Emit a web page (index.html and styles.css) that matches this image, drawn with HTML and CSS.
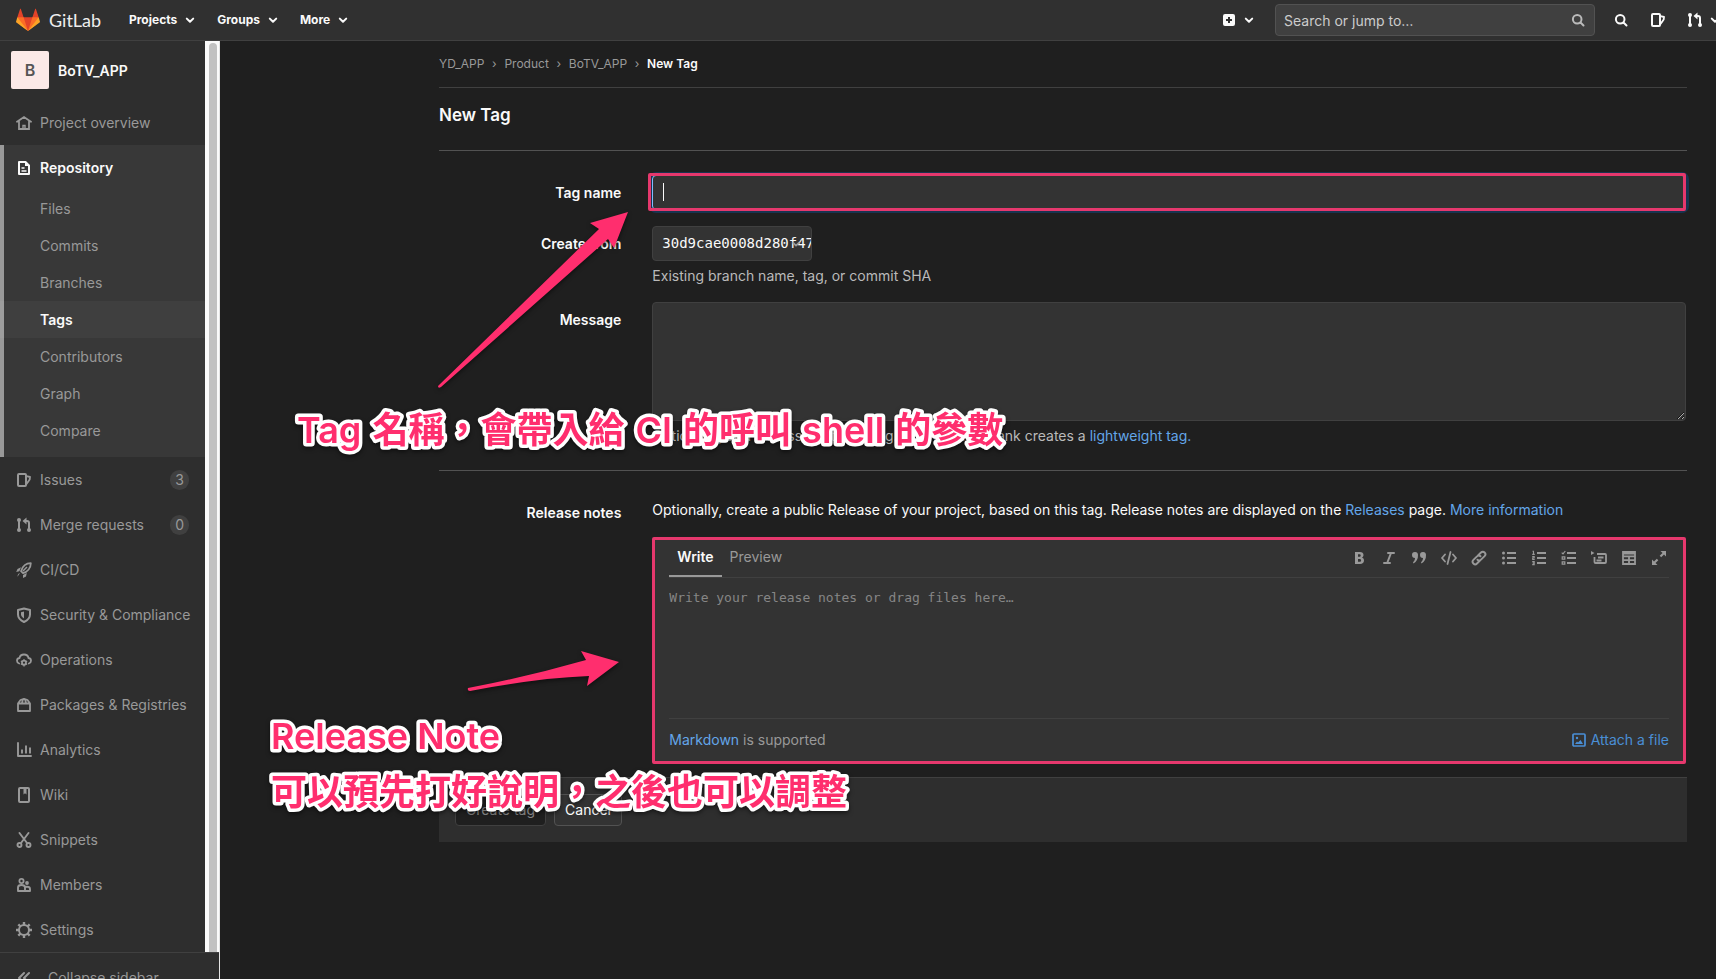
FILE: index.html
```html
<!DOCTYPE html>
<html lang="en">
<head>
<meta charset="utf-8">
<title>New Tag · BoTV_APP · GitLab</title>
<link rel="stylesheet" href="styles.css">
</head>
<body>
<svg class="sprite" aria-hidden="true">
  <symbol id="chevron" viewBox="0 0 16 16"><path d="M4.8 6.6 8 9.8l3.200-3.200" fill="none" stroke="currentColor" stroke-width="2" stroke-linecap="round" stroke-linejoin="round"/></symbol>
  <symbol id="home" viewBox="0 0 16 16"><path d="M1 6.700 8 2l7 4.700M3 6.500V14h10V6.500" fill="none" stroke="currentColor" stroke-width="1.800" stroke-linecap="round"/><path d="M7 14v-3.500h2V14" fill="none" stroke="currentColor" stroke-width="1.400"/></symbol>
  <symbol id="doc" viewBox="0 0 16 16"><path d="M3 2h6.500L13 5.500V14H3z" fill="none" stroke="currentColor" stroke-width="2" stroke-linejoin="round"/><path d="M5.500 8h3M5.500 11h5" fill="none" stroke="currentColor" stroke-width="1.600"/><path d="M9 2v4h4z" fill="currentColor"/></symbol>
  <symbol id="issues" viewBox="0 0 16 16"><rect x="2" y="2" width="8" height="12" rx="1" fill="none" stroke="currentColor" stroke-width="2"/><path d="M10.500 4.200 14 5l-.300 2.500-3.200 4.500" fill="none" stroke="currentColor" stroke-width="1.800" stroke-linejoin="round"/></symbol>
  <symbol id="merge" viewBox="0 0 16 16"><path d="M3 3v10M8.500 4H11q2 0 2 2v7" fill="none" stroke="currentColor" stroke-width="2"/><circle cx="3" cy="3" r="2" fill="currentColor"/><circle cx="3" cy="13" r="2" fill="currentColor"/><circle cx="13" cy="13" r="2" fill="currentColor"/><path d="M10.500.500v7L6.500 4z" fill="currentColor"/></symbol>
  <symbol id="rocket" viewBox="0 0 16 16"><path d="M14.800 1.200c-4.500 0-8.300 3.300-9.800 8L7 11.200c4.500-1.500 7.800-5.500 7.800-10z" fill="none" stroke="currentColor" stroke-width="1.800" stroke-linejoin="round"/><path d="M5 5.200 1.500 7 .200 10l3.200-.800zM7 13l3.800-2-.800 3.500L7 16zM1.500 14.800c0-2 .800-3.300 2.500-3.800" fill="currentColor"/><path d="m7 9 4-4" stroke="currentColor" stroke-width="1.500"/></symbol>
  <symbol id="shield" viewBox="0 0 16 16"><path d="M8 1.500 14 3v4.500c0 3.500-2.500 5.800-6 7.500-3.500-1.700-6-4-6-7.500V3z" fill="none" stroke="currentColor" stroke-width="2" stroke-linejoin="round"/><path d="M8 4.500v7C6 10.300 5 9 5 7.300v-2z" fill="currentColor"/></symbol>
  <symbol id="cloud" viewBox="0 0 16 16"><path d="M3.200 11.500C1.800 11 1 10 1 8.700 1 7.200 2 6.200 3.500 6 4 3.600 5.700 2.500 8 2.500S12 3.600 12.500 6c1.500.200 2.500 1.200 2.500 2.700 0 1.300-.800 2.300-2.200 2.800" fill="none" stroke="currentColor" stroke-width="1.800" stroke-linecap="round"/><circle cx="8" cy="10.700" r="2" fill="none" stroke="currentColor" stroke-width="1.700"/><path d="M8 7.200v1.500M8 12.700v1.800M4.900 9l1.400.800M9.700 11.700l1.400.800M11.100 9l-1.400.800M6.300 11.700l-1.400.800" stroke="currentColor" stroke-width="1.400"/></symbol>
  <symbol id="package" viewBox="0 0 16 16"><path d="M2 6.500h12V14H2zM2 6.500 4.500 3 8 1.800 11.500 3 14 6.500M6 6l1-4M10 6 9 2" fill="none" stroke="currentColor" stroke-width="1.800" stroke-linejoin="round"/></symbol>
  <symbol id="chart" viewBox="0 0 16 16"><path d="M2 1v13h13" fill="none" stroke="currentColor" stroke-width="1.900" stroke-linecap="round" stroke-linejoin="round"/><path d="M6 7.500v4M10 3.500v8M14 5.500v6" stroke="currentColor" stroke-width="1.900"/></symbol>
  <symbol id="book" viewBox="0 0 16 16"><rect x="3" y="1" width="10" height="14" rx="1" fill="none" stroke="currentColor" stroke-width="2"/><path d="M7.500 2v5.500L9 6.300l1.500 1.200V2z" fill="currentColor"/></symbol>
  <symbol id="scissors" viewBox="0 0 16 16"><path d="m3.500 1 7.500 10M12.500 1 5 11" stroke="currentColor" stroke-width="1.900" stroke-linecap="round"/><circle cx="3.500" cy="13" r="2" fill="none" stroke="currentColor" stroke-width="1.900"/><circle cx="12.500" cy="13" r="2" fill="none" stroke="currentColor" stroke-width="1.900"/></symbol>
  <symbol id="users" viewBox="0 0 16 16"><circle cx="5.500" cy="4" r="2.100" fill="none" stroke="currentColor" stroke-width="1.800"/><circle cx="11" cy="6" r="1.900" fill="currentColor"/><path d="M2 14v-3.500Q2 8 5.500 8T9 10.500V14zM9 14h5v-2q0-2.200-3-2.200-1.500 0-2 .800" fill="none" stroke="currentColor" stroke-width="1.900" stroke-linejoin="round"/></symbol>
  <symbol id="gear" viewBox="0 0 16 16"><circle cx="8" cy="8" r="5" fill="none" stroke="currentColor" stroke-width="2"/><path d="M8 0v3M8 13v3M0 8h3M13 8h3M2.300 2.300l2.200 2.200M11.500 11.500l2.200 2.200M13.700 2.300l-2.200 2.200M4.500 11.500l-2.200 2.200" stroke="currentColor" stroke-width="2.400"/></symbol>
  <symbol id="collapse" viewBox="0 0 16 16"><path d="M8 3 3 8l5 5M13 3 8 8l5 5" fill="none" stroke="currentColor" stroke-width="2" stroke-linecap="round" stroke-linejoin="round"/></symbol>
  <symbol id="plus" viewBox="0 0 16 16"><path fill-rule="evenodd" d="M4 2h8a2 2 0 0 1 2 2v8a2 2 0 0 1-2 2H4a2 2 0 0 1-2-2V4a2 2 0 0 1 2-2zm3 3v2H5v2h2v2h2V9h2V7H9V5z" fill="currentColor"/></symbol>
  <symbol id="search" viewBox="0 0 16 16"><circle cx="7.200" cy="7.200" r="4.300" fill="none" stroke="currentColor" stroke-width="2"/><path d="m10.500 10.500 3 3" stroke="currentColor" stroke-width="2" stroke-linecap="round"/></symbol>
  <symbol id="bold" viewBox="0 0 16 16"><path fill-rule="evenodd" d="M4 2h5c2.200 0 3.500 1.200 3.500 3 0 1.200-.600 2.100-1.600 2.600 1.300.500 2.100 1.500 2.100 2.900 0 2.200-1.500 3.500-4 3.500H4zm3 2.200v2.600h1.400c.800 0 1.300-.500 1.300-1.300s-.500-1.300-1.300-1.300zm0 4.700v2.900h1.600c.900 0 1.500-.500 1.500-1.400 0-1-.600-1.500-1.500-1.500z" fill="currentColor"/></symbol>
  <symbol id="italic" viewBox="0 0 16 16"><path d="M7 3h6M3 13h6M10 3 6.200 13" stroke="currentColor" stroke-width="2" stroke-linecap="round"/></symbol>
  <symbol id="quote" viewBox="0 0 16 16"><path d="M1 5a3 3 0 0 1 6-.200C7.200 9 5.500 12 2.500 13.500L2 12.300C3.500 11 4 9.500 4 8a3 3 0 0 1-3-3zm8 0a3 3 0 0 1 6-.200c.200 4.200-1.500 7.200-4.500 8.700l-.500-1.200c1.500-1.300 2-2.800 2-4.300a3 3 0 0 1-3-3z" fill="currentColor"/></symbol>
  <symbol id="code" viewBox="0 0 16 16"><path d="M4 4.500 1 8l3 3.500M12 4.500 15 8l-3 3.500M9.500 2l-3 12" fill="none" stroke="currentColor" stroke-width="1.800" stroke-linecap="round" stroke-linejoin="round"/></symbol>
  <symbol id="link" viewBox="0 0 16 16"><path d="m7 5.500 3-3a2.500 2.500 0 0 1 3.600 3.600L10 9.700a2.500 2.500 0 0 1-3.500 0M9 10.500l-3 3a2.500 2.500 0 0 1-3.600-3.600L6 6.300a2.500 2.500 0 0 1 3.500 0" fill="none" stroke="currentColor" stroke-width="1.900" stroke-linecap="round"/></symbol>
  <symbol id="bullets" viewBox="0 0 16 16"><path d="M6 3h9M6 8h9M6 13h9" stroke="currentColor" stroke-width="2"/><circle cx="2.500" cy="3" r="1.500" fill="currentColor"/><circle cx="2.500" cy="8" r="1.500" fill="currentColor"/><circle cx="2.500" cy="13" r="1.500" fill="currentColor"/></symbol>
  <symbol id="numbers" viewBox="0 0 16 16"><path d="M6 3h9M6 8h9M6 13h9" stroke="currentColor" stroke-width="2"/><path d="M1.500 1.300h1v3M1.200 4.400h2.600M1.200 6.600h2v1.400h-1.500v1.500h2M1.200 11.600h2v3h-2M1.700 13.100h1.500" fill="none" stroke="currentColor" stroke-width="1.100"/></symbol>
  <symbol id="tasks" viewBox="0 0 16 16"><path d="M6 3h9M6 8h9M6 13h9" stroke="currentColor" stroke-width="2"/><path d="m.700 2.600 1.300 1.300L4.300 1M1.200 6.800h2.600v2.400H1.200zM1.200 11.800h2.600v2.400H1.200z" fill="none" stroke="currentColor" stroke-width="1.200"/></symbol>
  <symbol id="details" viewBox="0 0 16 16"><path d="M0 1v4l3.500-2z" fill="currentColor"/><path d="M6 4h8q1 0 1 1v7q0 1-1 1H4.500q-1 0-1-1V7M7 7.500h5.500M5.500 10.500h5" fill="none" stroke="currentColor" stroke-width="1.800"/></symbol>
  <symbol id="table" viewBox="0 0 16 16"><path d="M2 2h12v12H2zM2 6.300h12M2 10.200h12M8 6v8" fill="none" stroke="currentColor" stroke-width="1.800"/><path d="M2 2h12v2.500H2z" fill="currentColor"/></symbol>
  <symbol id="expand" viewBox="0 0 16 16"><path d="M9.500 1H15v5.500l-2-2-2.800 2.800-1.500-1.500L11.500 3zM6.500 15H1V9.500l2 2 2.800-2.800 1.500 1.500L4.500 13z" fill="currentColor"/></symbol>
  <symbol id="image" viewBox="0 0 16 16"><rect x="2" y="2" width="12" height="12" rx="1" fill="none" stroke="currentColor" stroke-width="1.700"/><circle cx="6" cy="6" r="1.200" fill="currentColor"/><path d="m4 12 2-2.500 1 1L9.500 8l2.500 4z" fill="currentColor"/></symbol>
</svg>

<header class="topbar">
  <a class="brand" href="#">
    <svg class="tanuki" viewBox="0 0 36 36" aria-hidden="true">
      <path fill="#e24329" d="M2 14l9.380 9v-9l-4-12.280c-.205-.632-1.176-.632-1.380 0z"/>
      <path fill="#e24329" d="M34 14l-9.380 9v-9l4-12.280c.205-.632 1.176-.632 1.380 0z"/>
      <path fill="#e24329" d="M18 34.380 3 14h30z"/>
      <path fill="#fc6d26" d="M18 34.380 11.380 14H2l4 11z"/>
      <path fill="#fc6d26" d="M18 34.380 24.620 14H34l-4 11z"/>
      <path fill="#fca326" d="M2 14 .1 20.160c-.18.565 0 1.200.5 1.560l17.420 12.660z"/>
      <path fill="#fca326" d="M34 14l1.900 6.160c.18.565 0 1.200-.5 1.560L18 34.380z"/>
    </svg>
    <span class="wordmark">GitLab</span>
  </a>
  <nav class="topnav" aria-label="Main">
    <button type="button">Projects <svg class="icon"><use href="#chevron"/></svg></button>
    <button type="button">Groups <svg class="icon"><use href="#chevron"/></svg></button>
    <button type="button">More <svg class="icon"><use href="#chevron"/></svg></button>
  </nav>
  <button class="new-menu" type="button" aria-label="New"><svg class="icon"><use href="#plus"/></svg><svg class="icon"><use href="#chevron"/></svg></button>
  <div class="search">
    <input type="text" aria-label="Search" placeholder="Search or jump to…">
    <svg class="icon"><use href="#search"/></svg>
  </div>
  <nav class="shortcuts" aria-label="Shortcuts">
    <a href="#" aria-label="Search"><svg class="icon"><use href="#search"/></svg></a>
    <a href="#" aria-label="Issues"><svg class="icon"><use href="#issues"/></svg></a>
    <a href="#" aria-label="Merge requests"><svg class="icon"><use href="#merge"/></svg><svg class="icon"><use href="#chevron"/></svg></a>
  </nav>
</header>

<div class="layout">
  <aside class="sidebar">
    <div class="sidebar-scroll">
      <nav class="side-nav" aria-label="Project">
        <a class="project" href="#"><span class="avatar">B</span><span class="project-name">BoTV_APP</span></a>
        <a class="item" href="#"><svg class="icon"><use href="#home"/></svg>Project overview</a>
        <div class="section">
          <a class="item current" href="#"><svg class="icon"><use href="#doc"/></svg>Repository</a>
          <a class="sub" href="#">Files</a>
          <a class="sub" href="#">Commits</a>
          <a class="sub" href="#">Branches</a>
          <a class="sub current" href="#">Tags</a>
          <a class="sub" href="#">Contributors</a>
          <a class="sub" href="#">Graph</a>
          <a class="sub" href="#">Compare</a>
        </div>
        <a class="item" href="#"><svg class="icon"><use href="#issues"/></svg>Issues<span class="count">3</span></a>
        <a class="item" href="#"><svg class="icon"><use href="#merge"/></svg>Merge requests<span class="count">0</span></a>
        <a class="item" href="#"><svg class="icon"><use href="#rocket"/></svg>CI/CD</a>
        <a class="item" href="#"><svg class="icon"><use href="#shield"/></svg>Security &amp; Compliance</a>
        <a class="item" href="#"><svg class="icon"><use href="#cloud"/></svg>Operations</a>
        <a class="item" href="#"><svg class="icon"><use href="#package"/></svg>Packages &amp; Registries</a>
        <a class="item" href="#"><svg class="icon"><use href="#chart"/></svg>Analytics</a>
        <a class="item" href="#"><svg class="icon"><use href="#book"/></svg>Wiki</a>
        <a class="item" href="#"><svg class="icon"><use href="#scissors"/></svg>Snippets</a>
        <a class="item" href="#"><svg class="icon"><use href="#users"/></svg>Members</a>
        <a class="item" href="#"><svg class="icon"><use href="#gear"/></svg>Settings</a>
      </nav>
      <div class="scroll-track"><div class="scroll-thumb"></div></div>
    </div>
    <button class="collapse" type="button"><svg class="icon"><use href="#collapse"/></svg>Collapse sidebar</button>
  </aside>

  <main class="content">
    <nav class="crumbs" aria-label="Breadcrumb">
      <a href="#">YD_APP</a><span>›</span><a href="#">Product</a><span>›</span><a href="#">BoTV_APP</a><span>›</span><a class="here" href="#">New Tag</a>
    </nav>
    <h1>New Tag</h1>
    <form>
      <div class="row">
        <label for="tag-name">Tag name</label>
        <div class="field marked"><input id="tag-name" class="control tag-name" type="text"><span class="caret"></span></div>
      </div>
      <div class="row">
        <label for="ref">Create from</label>
        <div class="field">
          <button id="ref" class="control ref" type="button">30d9cae0008d280f47<svg class="icon"><use href="#chevron"/></svg></button>
          <p class="help">Existing branch name, tag, or commit SHA</p>
        </div>
      </div>
      <div class="row">
        <label for="message">Message</label>
        <div class="field">
          <textarea id="message" class="control message"></textarea>
          <p class="help">Optionally, add a message to the tag. Leaving this blank creates a <a href="#">lightweight tag.</a></p>
        </div>
      </div>
      <hr>
      <div class="row notes">
        <label for="notes">Release notes</label>
        <div class="field">
          <p class="intro">Optionally, create a public Release of your project, based on this tag. Release notes are displayed on the <a href="#">Releases</a> page. <a href="#">More information</a></p>
          <div class="editor">
            <div class="editor-head">
              <button class="tab active" type="button">Write</button>
              <button class="tab" type="button">Preview</button>
              <div class="tools">
                <button type="button" aria-label="Bold"><svg class="icon"><use href="#bold"/></svg></button>
                <button type="button" aria-label="Italic"><svg class="icon"><use href="#italic"/></svg></button>
                <button type="button" aria-label="Quote"><svg class="icon"><use href="#quote"/></svg></button>
                <button type="button" aria-label="Code"><svg class="icon"><use href="#code"/></svg></button>
                <button type="button" aria-label="Link"><svg class="icon"><use href="#link"/></svg></button>
                <button type="button" aria-label="Bullet list"><svg class="icon"><use href="#bullets"/></svg></button>
                <button type="button" aria-label="Numbered list"><svg class="icon"><use href="#numbers"/></svg></button>
                <button type="button" aria-label="Task list"><svg class="icon"><use href="#tasks"/></svg></button>
                <button type="button" aria-label="Collapsible section"><svg class="icon"><use href="#details"/></svg></button>
                <button type="button" aria-label="Table"><svg class="icon"><use href="#table"/></svg></button>
                <button type="button" aria-label="Full screen"><svg class="icon"><use href="#expand"/></svg></button>
              </div>
            </div>
            <textarea id="notes" class="notes-text" placeholder="Write your release notes or drag files here…"></textarea>
            <div class="editor-foot">
              <span><a href="#">Markdown</a> is supported</span>
              <button class="attach" type="button"><svg class="icon"><use href="#image"/></svg>Attach a file</button>
            </div>
          </div>
        </div>
      </div>
      <div class="actions">
        <button class="btn create" type="submit" disabled>Create tag</button>
        <button class="btn" type="button">Cancel</button>
      </div>
    </form>
  </main>
</div>

<svg class="callouts" aria-label="Callouts">
  <path d="M438 386 599 229 590 223 628 212 614 248 608 239 441 387Q438 389 438 386z"/>
  <path d="M468 688Q527 677 586 660L581 651 619 662 587 686 589 676Q537 678 470 691 467 691 468 688z"/>
  <text x="297" y="443">Tag<tspan dx="2"> 名稱，會帶入給</tspan><tspan dx="2"> CI</tspan><tspan dx="2"> 的呼叫</tspan><tspan dx="2"> shell</tspan><tspan dx="2"> 的參數</tspan></text>
  <text x="271" y="749">Release Note</text>
  <text x="271" y="805">可以預先打好說明，之後也可以調整</text>
</svg>
</body>
</html>
```
FILE: styles.css
```css
* { box-sizing: border-box; }

body {
  margin: 0;
  height: 100vh;
  display: flex;
  flex-direction: column;
  overflow: hidden;
  position: relative;
  background: #1f1f1f;
  color: #fafafa;
  font: 14px/20px Inter, "Noto Sans CJK TC", sans-serif;
}

a { color: #63a6e9; text-decoration: none; }
button { font: inherit; color: inherit; background: none; border: 0; padding: 0; white-space: nowrap; }
p { margin: 0; }
.sprite { display: none; }
.icon { width: 16px; height: 16px; flex: none; }

/* Top bar */
.topbar {
  flex: none;
  height: 41px;
  display: flex;
  align-items: center;
  padding-left: 16px;
  background: #303030;
  border-bottom: 1px solid #404040;
  overflow: hidden;
}
.brand { display: flex; align-items: center; gap: 9px; width: 113px; flex: none; color: #eee; }
.tanuki { width: 24px; height: 24px; }
.wordmark { font: 18px/24px Lato, sans-serif; }
.topnav { display: flex; gap: 19px; flex: 1; font-size: 12px; font-weight: 700; }
.topnav button { display: flex; align-items: center; gap: 5px; }
.new-menu { display: flex; align-items: center; gap: 4px; margin-right: 18px; }
.search { position: relative; width: 320px; flex: none; }
.search input {
  display: block;
  width: 100%;
  height: 32px;
  padding: 0 36px 0 8px;
  font: inherit;
  color: #ccc;
  background: #404040;
  border: 1px solid #525252;
  border-radius: 4px;
}
.search input::placeholder { color: #ccc; opacity: 1; }
.search .icon { position: absolute; right: 9px; top: 8px; color: #bababa; }
.shortcuts { display: flex; gap: 21px; margin: 0 -7px 0 18px; }
.shortcuts a { display: flex; align-items: center; gap: 4px; color: #fafafa; }

/* Sidebar */
.layout { display: flex; flex: 1; min-height: 0; }
.sidebar { width: 220px; flex: none; background: #2e2e2e; border-right: 1px solid #e4e4e4; }
.sidebar-scroll { display: flex; }
.side-nav { flex: 1; min-width: 0; }
.scroll-track { width: 14px; flex: none; padding: 2px 2px 0 4px; background: #fafafa; }
.scroll-thumb { height: 100%; background: #c1c1c1; border-radius: 4px 4px 0 0; }
.project { display: flex; align-items: center; gap: 9px; padding: 10px 11px 11px; color: #fafafa; font-weight: 600; }
.project-name { padding-top: 2px; }
.avatar {
  width: 38px;
  height: 38px;
  border-radius: 2px;
  background: #fbe9e7;
  color: #555;
  font-size: 16px;
  line-height: 38px;
  text-align: center;
}
.item { display: flex; align-items: center; gap: 8px; height: 45px; padding: 0 16px; color: #999; white-space: nowrap; }
.section { background: #383838; padding-bottom: 8px; box-shadow: inset 4px 0 #999; }
.item.current { color: #fafafa; font-weight: 600; }
.sub { display: block; padding: 9px 40px 8px; color: #999; }
.sub.current { color: #fafafa; font-weight: 600; background: rgba(255, 255, 255, .04); }
.count {
  margin-left: auto;
  min-width: 18px;
  padding: 0 5px;
  border-radius: 10px;
  background: #404040;
  text-align: center;
}
.collapse {
  width: 100%;
  height: 48px;
  display: flex;
  align-items: center;
  gap: 16px;
  padding: 2px 16px 0;
  color: #999;
  border-top: 1px solid #404040;
}

/* Content */
.content { flex: 1; min-width: 0; padding: 0 29px 0 219px; }
.crumbs {
  display: flex;
  padding: 13px 0;
  font-size: 12px;
  border-bottom: 1px solid #404040;
}
.crumbs a { color: #999; }
.crumbs span { width: 20px; text-align: center; color: #999; }
.crumbs .here { color: #fafafa; font-weight: 600; }
h1 { margin: 0; padding: 15px 0 23px; font-size: 17px; line-height: 24px; font-weight: 600; border-bottom: 1px solid #525252; }
form { padding-top: 24px; }
.row { display: grid; grid-template-columns: 2fr 10fr; margin: 0 -16px 16px; }
.row > label { padding: 8px 15px 0; text-align: right; font-weight: 600; }
.field { padding: 0 17px 0 16px; min-width: 0; }
.control { display: block; background: #333; border: 1px solid #404040; border-radius: 4px; color: #fafafa; font: inherit; }
.tag-name { width: 100%; height: 35px; padding: 6px 10px; border-color: #80bdff; box-shadow: 0 0 0 3px #193350; outline: 0; }
.marked { position: relative; }
.marked::after {
  content: "";
  position: absolute;
  inset: -2px 17px -1px 12px;
  border: 3px solid #e6386d;
  border-radius: 2px;
  pointer-events: none;
}
.caret { position: absolute; left: 27px; top: 8px; width: 1px; height: 18px; background: #fafafa; }
.ref {
  position: relative;
  width: 160px;
  height: 35px;
  padding: 0 9px 2px;
  overflow: hidden;
  text-align: left;
  font: 14px/20px "DejaVu Sans Mono", monospace;
}
.ref .icon { position: absolute; right: 8px; top: 10px; width: 14px; height: 14px; color: #999; }
.help { padding-top: 5px; color: #bababa; }
.message { width: 100%; height: 119px; resize: vertical; }
hr { margin: 24px 0 29px; border: 0; border-top: 1px solid #525252; }
.notes > label { padding-top: 3px; }
.notes { margin-bottom: 13px; }
.editor { margin-top: 17px; padding: 0 14px; background: #333; border: 3px solid #e6386d; border-radius: 2px; }
.editor-head { display: flex; align-items: stretch; height: 38px; border-bottom: 1px solid #404040; }
.tab { padding: 0 8px 4px; color: #999; }
.tab.active { color: #fafafa; font-weight: 600; border-bottom: 2px solid #999; padding-bottom: 2px; }
.tools { display: flex; gap: 14px; align-items: center; margin-left: auto; padding: 0 2px 2px 0; color: #999; }
.tools button { display: flex; }
.notes-text {
  display: block;
  width: 100%;
  height: 140px;
  padding: 10px 0;
  background: none;
  border: 0;
  resize: none;
  color: #fafafa;
  font: 13px/20px "DejaVu Sans Mono", monospace;
}
.notes-text::placeholder { color: #868686; opacity: 1; }
.editor-foot { display: flex; justify-content: space-between; align-items: center; height: 43px; border-top: 1px solid #404040; color: #999; }
.attach { display: flex; align-items: center; gap: 4px; color: #4a8fd6; }
.actions { display: flex; gap: 8px; padding: 16px; background: #2e2e2e; border-top: 1px solid #404040; }
.btn { height: 32px; padding: 0 10px; border: 1px solid #525252; border-radius: 4px; background: #333; }
.create { background: #1f1f1f; border-color: #404040; color: #868686; }

/* Callouts drawn over the page */
.callouts {
  position: absolute;
  inset: 0;
  width: 100%;
  height: 100%;
  pointer-events: none;
  fill: #ff2e6e;
  filter: drop-shadow(0 2px 2px rgba(0, 0, 0, .5));
}
.callouts text {
  white-space: pre;
  font-size: 36px;
  font-weight: 600;
  stroke: #fff;
  stroke-width: 7px;
  stroke-linejoin: round;
  paint-order: stroke fill;
}
```
